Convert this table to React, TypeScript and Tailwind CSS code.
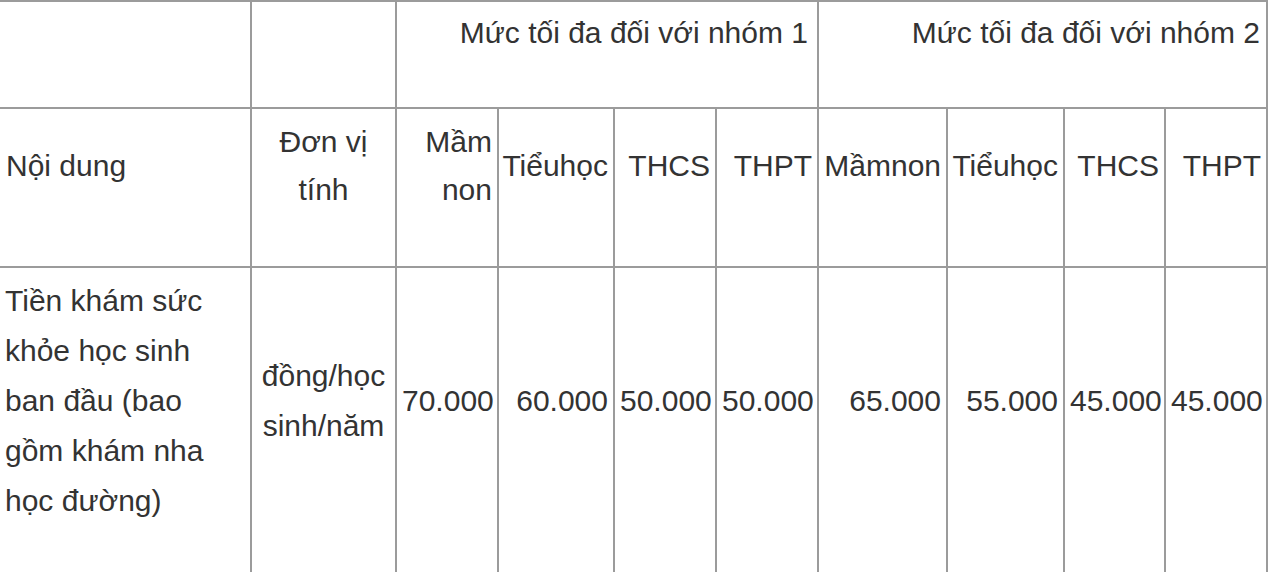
const th = "border-2 border-[#9b9b9b] px-[5px] font-normal";

export default function App() {
  return (
    <div className="min-h-screen overflow-hidden bg-white font-['Liberation_Sans',Arial,sans-serif] text-[30px] text-[#333]">
      <table className="table-fixed border-collapse border-l-0" style={{ width: 1268 }}>
        <colgroup>
          <col className="w-[251px]" />
          <col className="w-[145px]" />
          <col className="w-[102px]" />
          <col className="w-[116px]" />
          <col className="w-[102px]" />
          <col className="w-[102px]" />
          <col className="w-[129px]" />
          <col className="w-[117px]" />
          <col className="w-[101px]" />
          <col className="w-[102px]" />
        </colgroup>
        <tbody className="leading-[48px]">
          <tr className="h-[107px]">
            <td className={`${th} border-l-0 align-top`} />
            <td className={`${th} align-top`} />
            <td colSpan={4} className={`${th} pt-[7px] pr-[9px] text-right align-top`}>
              Mức tối đa đối với nhóm 1
            </td>
            <td colSpan={4} className={`${th} pt-[7px] pr-[6px] text-right align-top`}>
              Mức tối đa đối với nhóm 2
            </td>
          </tr>
          <tr className="h-[159px]">
            <td className={`${th} border-l-0 pl-[6px] pt-[4px] pb-[48px] text-left align-middle`}>Nội dung</td>
            <td className={`${th} pt-[4px] pb-[48px] text-center align-middle`}>
              Đơn vị
              <br />
              tính
            </td>
            <td className={`${th} pt-[4px] pb-[48px] text-right align-middle`}>
              Mầm
              <br />
              non
            </td>
            <td className={`${th} pt-[4px] pb-[48px] pl-[2px] text-right align-middle`}>Tiểuhọc</td>
            <td className={`${th} pt-[4px] pb-[48px] text-right align-middle`}>THCS</td>
            <td className={`${th} pt-[4px] pb-[48px] text-right align-middle`}>THPT</td>
            <td className={`${th} pt-[4px] pb-[48px] pl-[2px] text-right align-middle`}>Mầmnon</td>
            <td className={`${th} pt-[4px] pb-[48px] pl-[2px] text-right align-middle`}>Tiểuhọc</td>
            <td className={`${th} pt-[4px] pb-[48px] text-right align-middle`}>THCS</td>
            <td className={`${th} pt-[4px] pb-[48px] text-right align-middle`}>THPT</td>
          </tr>
          <tr className="leading-[50px]">
            <td className={`${th} border-l-0 pt-[8px] pb-[52px] text-left align-middle`}>
              Tiền khám sức khỏe học sinh ban đầu (bao gồm khám nha học đường)
            </td>
            <td className={`${th} pt-[8px] pb-[52px] text-center align-middle`}>
              đồng/học sinh/năm
            </td>
            <td className={`${th} pt-[8px] pb-[52px] text-right align-middle`}>70.000</td>
            <td className={`${th} pt-[8px] pb-[52px] text-right align-middle`}>60.000</td>
            <td className={`${th} pt-[8px] pb-[52px] text-right align-middle`}>50.000</td>
            <td className={`${th} pt-[8px] pb-[52px] text-right align-middle`}>50.000</td>
            <td className={`${th} pt-[8px] pb-[52px] text-right align-middle`}>65.000</td>
            <td className={`${th} pt-[8px] pb-[52px] text-right align-middle`}>55.000</td>
            <td className={`${th} pt-[8px] pb-[52px] text-right align-middle`}>45.000</td>
            <td className={`${th} pt-[8px] pb-[52px] text-right align-middle`}>45.000</td>
          </tr>
        </tbody>
      </table>
    </div>
  );
}
